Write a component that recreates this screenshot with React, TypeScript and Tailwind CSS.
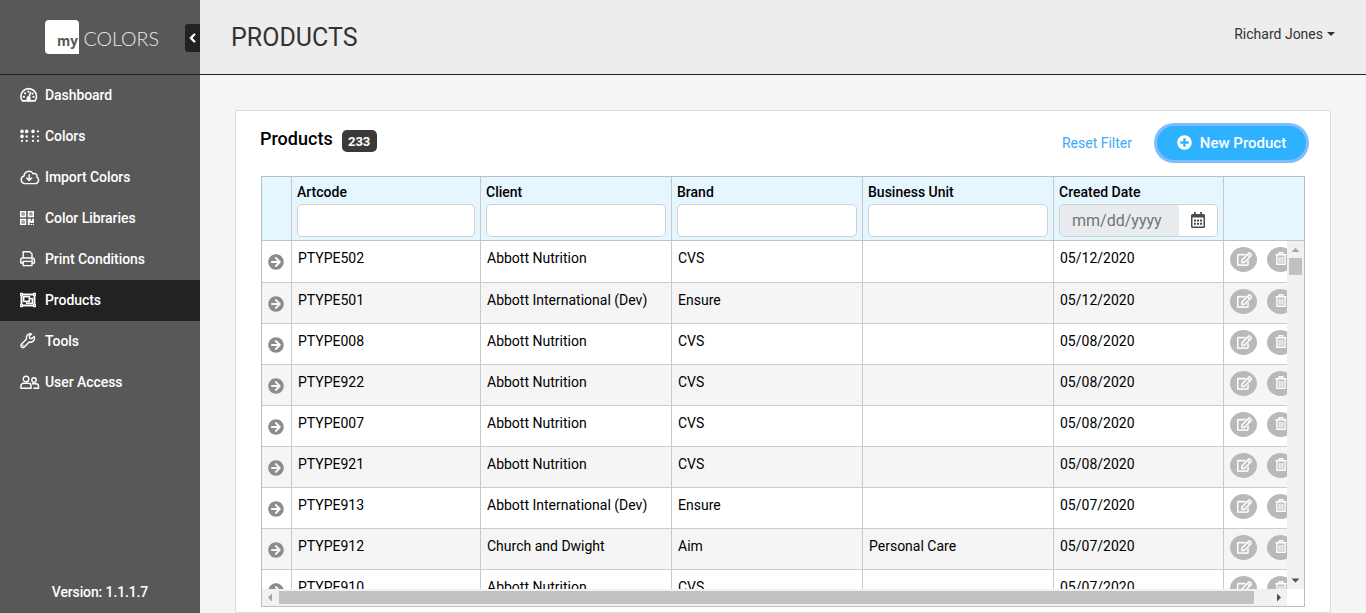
import React from "react";
import {
  FaArrowCircleRight,
  FaChevronLeft,
  FaPlusCircle,
  FaRegEdit,
  FaRegObjectGroup,
} from "react-icons/fa";

const stroke = {
  fill: "none",
  stroke: "currentColor",
  strokeWidth: 1.4,
  strokeLinejoin: "round" as const,
  strokeLinecap: "round" as const,
};

const DashboardIcon = () => (
  <svg width="18" height="16" viewBox="0 0 18 16" {...stroke}>
    <path strokeWidth="1.6" d="M2.5 13.9C1.3 12.6.9 11 .9 9.4a7.8 7.8 0 0 1 15.6 0c0 1.6-.5 3.2-1.6 4.5z" />
    <path strokeWidth="1.6" d="M8.7 10.6L10.6 5.6" />
    <circle cx="8.6" cy="11.4" r="1.5" fill="currentColor" />
    <g fill="currentColor" stroke="none">
      <circle cx="3.9" cy="9.8" r="1.1" />
      <circle cx="5.1" cy="6.3" r="1.1" />
      <circle cx="8.5" cy="4.7" r="1.1" />
      <circle cx="12.7" cy="6.6" r="1.1" />
      <circle cx="13.5" cy="9.8" r="1.1" />
    </g>
  </svg>
);

const ColorsIcon = () => (
  <svg width="20" height="14" viewBox="0 0 20 14" fill="currentColor">
    <circle cx="2" cy="2.4" r="1.8" />
    <circle cx="6.7" cy="2.4" r="1.8" />
    <circle cx="13" cy="2.4" r="1.8" />
    <circle cx="18" cy="2.4" r="1.1" />
    <circle cx="2" cy="7.4" r="1.8" />
    <circle cx="6.7" cy="7.4" r="1.2" />
    <circle cx="13" cy="7.4" r="1.2" />
    <circle cx="18" cy="7.4" r="1" />
    <circle cx="2" cy="11.9" r="1.1" />
    <circle cx="6.7" cy="11.9" r="1.1" />
    <circle cx="13" cy="11.9" r="1.1" />
    <circle cx="18" cy="11.9" r="1.1" />
  </svg>
);

const CloudIcon = () => (
  <svg width="20" height="15" viewBox="0 0 20 15" {...stroke}>
    <path d="M4.6 13.6h10.6a3.4 3.4 0 0 0 1.6-6.4 2.6 2.6 0 0 0-3.5-3.4A5 5 0 0 0 4 6 3.9 3.9 0 0 0 4.6 13.6z" />
    <path d="M9.2 4.8v5.4M6.7 7.9l2.5 2.5 2.5-2.5" />
  </svg>
);

const LibraryIcon = () => (
  <svg width="14" height="14" viewBox="0 0 14 14" fill="none" stroke="currentColor">
    <path strokeWidth="1.6" d="M.8.8h4.6v4.6H.8zM8.6.8h4.6v4.6H8.6zM.8 8.6h4.6v4.6H.8z" />
    <path stroke="none" fill="currentColor" d="M2.4 2.4h1.4v1.4H2.4zM10.2 2.4h1.4v1.4h-1.4zM2.4 10.2h1.4v1.4H2.4zM7.8 7.8h3v2h1.4v-2H14v4.3h-3.6V11H9.7v3H7.8zM10.6 12.9H12V14h-1.4zM12.7 12.9H14V14h-1.3z" />
  </svg>
);

const PrintIcon = () => (
  <svg width="16" height="16" viewBox="0 0 16 16" {...stroke}>
    <path d="M3.2 7V.8h6.6l2.2 2.2v4M3.2 12H.8V8.8A1.8 1.8 0 0 1 2.6 7h10a1.8 1.8 0 0 1 1.8 1.8V12H12M3.2 10.4H12v4.2H3.2z" />
    <circle cx="12.2" cy="9" r=".3" />
  </svg>
);

const WrenchIcon = () => (
  <svg width="16" height="16" viewBox="0 0 16 16" {...stroke}>
    <path d="M14.1 3.5l-2.3 2.1-2.1-.4-.4-2.1 2.2-2.2a4 4 0 0 0-4.9 5.2L1.4 11.3a2 2 0 0 0 2.8 2.8l5.1-5.1a4 4 0 0 0 4.8-5.5z" />
    <circle cx="2.9" cy="12.5" r=".25" />
  </svg>
);

const UsersIcon = () => (
  <svg width="20" height="15" viewBox="0 0 20 15" {...stroke}>
    <circle cx="6" cy="4" r="2.8" />
    <path d="M3.6 8.3h4.8a2.7 2.7 0 0 1 2.7 2.7v2.3H.9V11a2.7 2.7 0 0 1 2.7-2.7z" />
    <circle cx="14" cy="5" r="2.2" />
    <path d="M12.5 8.8H16a2.5 2.5 0 0 1 2.5 2.5v2h-4.6" />
  </svg>
);

const CalendarIcon = () => (
  <svg width="14" height="16" viewBox="0 0 14 16" fill="#454b50">
    <path
      fillRule="evenodd"
      d="M3 0h1.8v2h4.4V0H11v2h1.5A1.5 1.5 0 0 1 14 3.500v11a1.500 1.500 0 0 1-1.500 1.500h-11A1.500 1.500 0 0 1 0 14.500v-11A1.500 1.500 0 0 1 1.500 2H3zM1.500 5.500v9h11v-9z"
    />
    <path d="M3 7.500h2v2H3zM6 7.500h2v2H6zM9 7.500h2v2H9zM3 10.700h2v2H3zM6 10.700h2v2H6zM9 10.700h2v2H9z" />
  </svg>
);

const TrashIcon = () => (
  <svg width="12" height="14" viewBox="0 0 12 14" fill="none" stroke="currentColor">
    <path strokeWidth="1.4" d="M.5 2.700h11M3.700 2.500L4.300.8h3.400l.6 1.700M1.900 3v9.200h8.200V3" />
    <path strokeWidth="1.100" d="M4.200 4.700v6M6 4.700v6M7.800 4.700v6" />
  </svg>
);

const nav: { label: string; icon: React.ReactNode; active?: boolean }[] = [
  { label: "Dashboard", icon: <DashboardIcon /> },
  { label: "Colors", icon: <ColorsIcon /> },
  { label: "Import Colors", icon: <CloudIcon /> },
  { label: "Color Libraries", icon: <LibraryIcon /> },
  { label: "Print Conditions", icon: <PrintIcon /> },
  { label: "Products", icon: <FaRegObjectGroup className="h-[16px] w-[16px]" stroke="currentColor" strokeWidth="12" />, active: true },
  { label: "Tools", icon: <WrenchIcon /> },
  { label: "User Access", icon: <UsersIcon /> },
];

const rows = [
  ["PTYPE502", "Abbott Nutrition", "CVS", "", "05/12/2020"],
  ["PTYPE501", "Abbott International (Dev)", "Ensure", "", "05/12/2020"],
  ["PTYPE008", "Abbott Nutrition", "CVS", "", "05/08/2020"],
  ["PTYPE922", "Abbott Nutrition", "CVS", "", "05/08/2020"],
  ["PTYPE007", "Abbott Nutrition", "CVS", "", "05/08/2020"],
  ["PTYPE921", "Abbott Nutrition", "CVS", "", "05/08/2020"],
  ["PTYPE913", "Abbott International (Dev)", "Ensure", "", "05/07/2020"],
  ["PTYPE912", "Church and Dwight", "Aim", "Personal Care", "05/07/2020"],
  ["PTYPE910", "Abbott Nutrition", "CVS", "", "05/07/2020"],
];

function Sidebar() {
  return (
    <aside className="flex h-full w-[200px] shrink-0 flex-col bg-[#585858] text-white">
      <div className="flex h-[75px] items-start border-b border-[#222]">
        <div className="ml-[45px] mt-5 flex w-[140px] items-start">
          <div className="flex h-[34px] w-[34px] items-end justify-end rounded-[4px] rounded-br-none bg-white">
            <span className="pr-[1px] pb-[3px] font-['Open_Sans'] text-[13.5px] leading-[20px] font-bold text-[#585858]">my</span>
          </div>
          <svg className="mt-[7px] ml-1" width="80" height="24" viewBox="0 0 80 24">
            <text x="0.5" y="19" textLength="75.5" lengthAdjust="spacingAndGlyphs" fontFamily="Lato, sans-serif" fontWeight="300" fontSize="19.5" fill="#e8e8e8">
              COLORS
            </text>
          </svg>
        </div>
        <button className="mt-6 flex h-7 w-[15px] items-center justify-center rounded-l-[3px] bg-[#222]">
          <FaChevronLeft className="h-[10px] w-[9px]" stroke="currentColor" strokeWidth="50" />
        </button>
      </div>
      <nav className="flex-1">
        {nav.map((n) => (
          <a key={n.label} className={`flex h-[41px] items-center pl-[19.5px] ${n.active ? "bg-[#222]" : ""}`}>
            <span className="flex w-[25.500px] shrink-0 items-center pb-[1px]">{n.icon}</span>
            <span className="text-[14px] leading-[21px] font-medium tracking-[-0.06px]">{n.label}</span>
          </a>
        ))}
      </nav>
      <div className="pb-[10px] text-center text-[14px] leading-[21px] font-medium tracking-[-0.12px]">Version: 1.1.1.7</div>
    </aside>
  );
}

function HeadCell({ label, width }: { label: string; width: string }) {
  return (
    <div className={`shrink-0 border-r border-[#c5c9cc] px-[5px] pt-[5px] ${width}`}>
      <div className="text-[14px] leading-[21px] font-medium text-black">{label}</div>
      <input className="mt-[1px] block h-[33px] w-full rounded-[5px] border border-[#ced0d2] bg-white outline-none" />
    </div>
  );
}

function Row({ data, index }: { data: string[]; index: number }) {
  const cell = "shrink-0 border-r border-[#c9cacc] pl-[6px]";
  return (
    <div
      className={`flex shrink-0 border-b border-[#cacccd] text-[14px] leading-[21px] text-black ${index === 0 ? "h-[42px]" : "h-[41px]"} ${index % 2 ? "bg-[#f5f5f5]" : "bg-white"}`}
    >
      <div className="w-[30px] shrink-0 border-r border-[#c9cacc] pt-[13px] pl-[6px]">
        <FaArrowCircleRight className="h-4 w-4 text-[#8c8c8c]" />
      </div>
      <div className={`w-[189px] pt-[7px] ${cell}`}>{data[0]}</div>
      <div className={`w-[191px] pt-[7px] ${cell}`}>{data[1]}</div>
      <div className={`w-[191px] pt-[7px] ${cell}`}>{data[2]}</div>
      <div className={`w-[191px] pt-[7px] ${cell}`}>{data[3]}</div>
      <div className={`w-[170px] pt-[7px] ${cell}`}>{data[4]}</div>
      <div className="flex shrink-0 gap-[10px] pt-[6px] pl-[6px]">
        <div className="flex h-[25px] w-[27px] justify-center rounded-[50%] bg-[#b9b9b9] pt-[5px] text-white">
          <FaRegEdit className="ml-[2px] h-[14px] w-[15px]" stroke="currentColor" strokeWidth="16" />
        </div>
        <div className="flex h-[25px] w-[27px] justify-center rounded-[50%] bg-[#b9b9b9] pt-[5px] text-white">
          <TrashIcon />
        </div>
      </div>
    </div>
  );
}

function ProductTable() {
  return (
    <div className="mx-[25px] flex h-[431px] flex-col border border-[#b9bfc6]">
      <div className="flex h-[64px] shrink-0 border-b border-[#bdc3c7] bg-[#e6f6fe]">
        <div className="w-[30px] shrink-0 border-r border-[#c5c9cc]" />
        <HeadCell label="Artcode" width="w-[189px]" />
        <HeadCell label="Client" width="w-[191px]" />
        <HeadCell label="Brand" width="w-[191px]" />
        <HeadCell label="Business Unit" width="w-[191px]" />
        <div className="w-[170px] shrink-0 border-r border-[#c5c9cc] px-[5px] pt-[5px]">
          <div className="text-[14px] leading-[21px] font-medium text-black">Created Date</div>
          <div className="mt-[1px] flex h-[33px] overflow-hidden rounded-[5px] border border-[#ced0d2]">
            <div className="w-[119px] bg-[#e9ecef] pl-3 text-[16px] leading-[31px] text-[#6c757d]">mm/dd/yyyy</div>
            <div className="flex flex-1 items-start justify-center bg-white pt-[7px]">
              <CalendarIcon />
            </div>
          </div>
        </div>
      </div>
      <div className="flex h-[348px] shrink-0">
        <div className="flex w-[1025px] flex-col overflow-hidden">
          {rows.map((r, i) => (
            <Row key={r[0]} data={r} index={i} />
          ))}
        </div>
        <div className="flex w-[17px] flex-col items-center bg-[#f1f1f1]">
          <svg width="17" height="17" className="shrink-0">
            <path d="M8.500 7l4 4h-8z" fill="#a3a3a3" />
          </svg>
          <div className="h-[17px] w-[13px] bg-[#c1c1c1]" />
          <div className="flex-1" />
          <svg width="17" height="17" className="shrink-0">
            <path d="M8.500 10.500l-4-4h8z" fill="#505050" />
          </svg>
        </div>
      </div>
      <div className="flex h-[17px] shrink-0">
        <div className="flex w-[1025px] items-center bg-[#f1f1f1]">
          <svg width="17" height="17" className="shrink-0">
            <path d="M6 8.500l4-4v8z" fill="#a3a3a3" />
          </svg>
          <div className="h-[13px] w-[975px] bg-[#c1c1c1]" />
          <div className="flex-1" />
          <svg width="17" height="17" className="shrink-0">
            <path d="M11 8.500l-4-4v8z" fill="#505050" />
          </svg>
        </div>
      </div>
    </div>
  );
}

export default function App() {
  return (
    <div className="flex h-[613px] w-[1366px] overflow-hidden bg-[#f5f5f5] font-['Roboto',sans-serif]">
      <Sidebar />
      <div className="flex flex-1 flex-col">
        <header className="flex h-[75px] shrink-0 items-start justify-between border-b border-[#222] bg-[#ededed] pr-[31px] pl-[31px] text-[#333]">
          <h1 className="mt-[20px] text-[25px] leading-[36px]">PRODUCTS</h1>
          <div className="mt-[24px] flex items-center gap-1 text-[14px] leading-[21px]">
            Richard Jones
            <span className="mb-[2px] h-0 w-0 border-x-4 border-t-4 border-x-transparent border-t-[#333]" />
          </div>
        </header>
        <main className="mx-[35px] mt-[35px] h-[503px] w-[1096px] rounded-[2px] border border-[#dcdcdc] bg-white">
          <div className="flex h-[65px] items-start pr-[24px] pl-6">
            <h2 className="mt-[14px] text-[18px] leading-[27px] font-medium text-black">Products</h2>
            <span className="mt-[19px] ml-[9px] flex h-[22px] w-[35px] items-center justify-center rounded-[5px] bg-[#3a3a3a] pt-[1px] text-[13px] font-bold text-white">
              233
            </span>
            <a className="mt-[22px] ml-auto text-[14px] leading-[21px] text-[#3fa9f5]">Reset Filter</a>
            <button className="mt-[15px] ml-[25px] flex h-[34px] w-[149px] items-center justify-center rounded-full bg-[#2eb2ff] text-[15px] font-medium text-white ring-3 ring-[#80bdff]">
              <FaPlusCircle className="mr-2 -mt-px h-[15px] w-[15px]" />
              New Product
            </button>
          </div>
          <ProductTable />
        </main>
      </div>
    </div>
  );
}
